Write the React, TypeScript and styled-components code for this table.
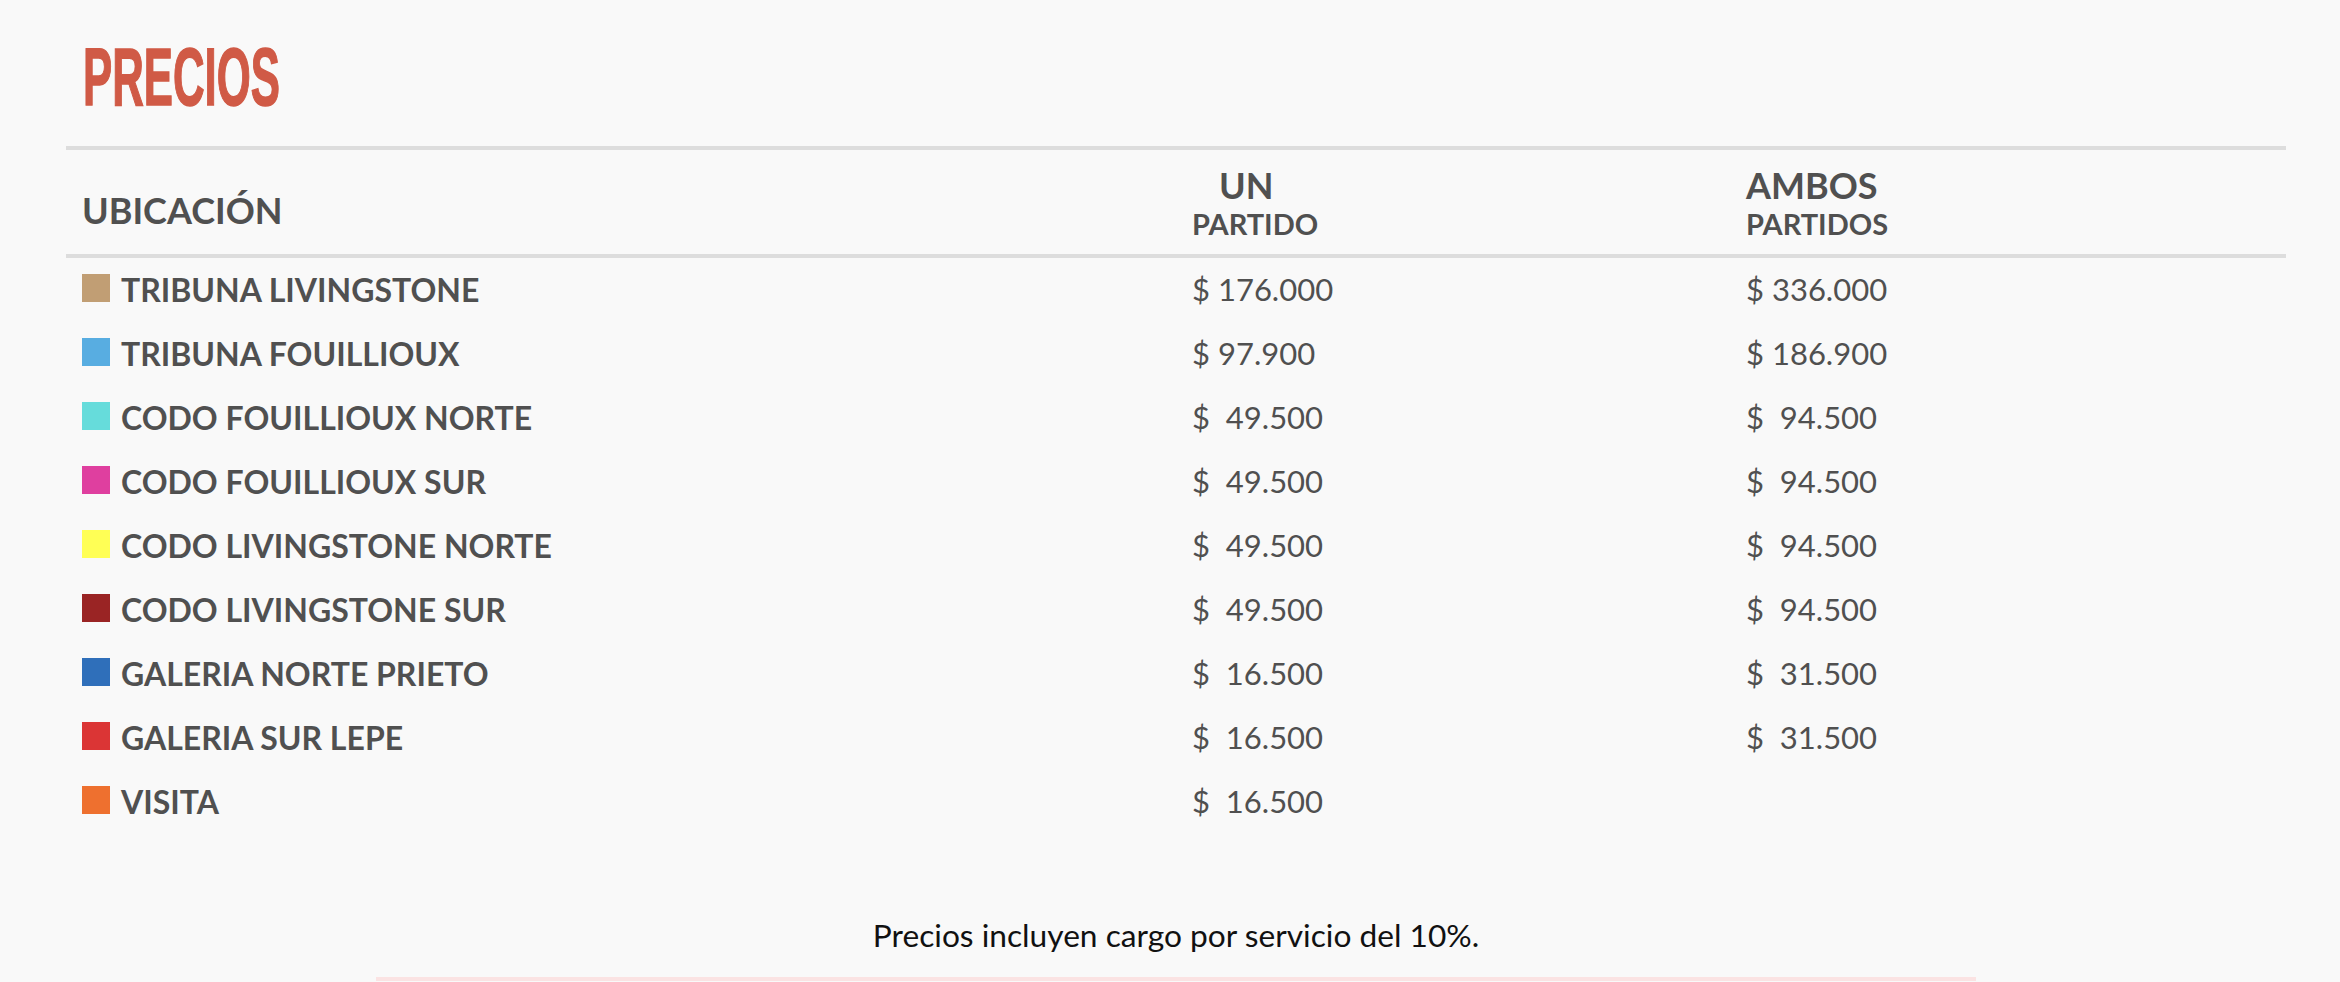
import React from "react";
import styled, { createGlobalStyle } from "styled-components";

const GlobalStyle = createGlobalStyle`
  html, body {
    margin: 0;
    padding: 0;
    background: #f9f9f9;
  }
  body {
    font-family: Lato, "Noto Sans", sans-serif;
    color: #505050;
  }
`;

const Page = styled.main`
  min-height: 982px;
  background: #f9f9f9;
`;

const Section = styled.section`
  width: 2220px;
  margin-left: 66px;
  display: flex;
  flex-direction: column;
`;

const Title = styled.h1`
  margin: 37px 0 28px 17px;
  font-family: "Liberation Sans Narrow", "Liberation Sans", Arial, sans-serif;
  font-weight: 700;
  font-size: 81px;
  line-height: 1;
  color: #d05a46;
  display: inline-block;
  align-self: flex-start;
  transform: scaleX(0.54);
  transform-origin: left center;
  -webkit-text-stroke: 1.5px #d05a46;
`;

const Grid = styled.div`
  display: grid;
  grid-template-columns: 1110px 554px 1fr;
`;

const HeadRow = styled(Grid)`
  height: 104px;
  border-top: 4px solid #dddddd;
  border-bottom: 4px solid #dddddd;
`;

const HeadCell = styled.div<{ $top: number }>`
  padding: ${(p) => p.$top}px 0 0 16px;
  display: flex;
  flex-direction: column;
  font-weight: 700;
  color: #505050;
`;

const HeadMain = styled.span<{ $indent?: number }>`
  font-size: 36px;
  line-height: 1.2;
  padding-left: ${(p) => p.$indent ?? 0}px;
`;

const HeadSub = styled.span`
  font-size: 29px;
  line-height: 1.2;
`;

const Row = styled(Grid)`
  height: 64px;
  align-items: center;
`;

const Cell = styled.div`
  padding-left: 16px;
  display: flex;
  align-items: center;
  line-height: 1.2;
`;

const Location = styled(Cell)`
  font-weight: 700;
  font-size: 32px;
  gap: 11px;
`;

const Swatch = styled.span<{ $color: string }>`
  width: 28px;
  height: 28px;
  flex: none;
  margin-bottom: 4px;
  background: ${(p) => p.$color};
`;

const Price = styled(Cell)`
  font-weight: 400;
  font-size: 31px;
  white-space: pre;
`;

const Note = styled.p`
  margin: 82px 0 0;
  text-align: center;
  font-size: 31.7px;
  line-height: 1.2;
  color: #111111;
`;

const Rule = styled.div`
  width: 1600px;
  align-self: center;
  margin-top: 23px;
  border-top: 4px solid #fbe3e3;
`;

type Item = { name: string; color: string; one: string; both?: string };

const items: Item[] = [
  { name: "TRIBUNA LIVINGSTONE", color: "#c19e74", one: "$ 176.000", both: "$ 336.000" },
  { name: "TRIBUNA FOUILLIOUX", color: "#58ade1", one: "$ 97.900", both: "$ 186.900" },
  { name: "CODO FOUILLIOUX NORTE", color: "#66dcdb", one: "$  49.500", both: "$  94.500" },
  { name: "CODO FOUILLIOUX SUR", color: "#df3f9f", one: "$  49.500", both: "$  94.500" },
  { name: "CODO LIVINGSTONE NORTE", color: "#ffff55", one: "$  49.500", both: "$  94.500" },
  { name: "CODO LIVINGSTONE SUR", color: "#9a2424", one: "$  49.500", both: "$  94.500" },
  { name: "GALERIA NORTE PRIETO", color: "#2f6fba", one: "$  16.500", both: "$  31.500" },
  { name: "GALERIA SUR LEPE", color: "#db3535", one: "$  16.500", both: "$  31.500" },
  { name: "VISITA", color: "#ee702f", one: "$  16.500" },
];

export default function App() {
  return (
    <Page>
      <GlobalStyle />
      <Section>
        <Title>PRECIOS</Title>
        <div>
          <HeadRow>
            <HeadCell $top={39}>
              <HeadMain>UBICACIÓN</HeadMain>
            </HeadCell>
            <HeadCell $top={14}>
              <HeadMain $indent={27}>UN</HeadMain>
              <HeadSub>PARTIDO</HeadSub>
            </HeadCell>
            <HeadCell $top={14}>
              <HeadMain>AMBOS</HeadMain>
              <HeadSub>PARTIDOS</HeadSub>
            </HeadCell>
          </HeadRow>
          {items.map((it) => (
            <Row key={it.name}>
              <Location>
                <Swatch $color={it.color} />
                {it.name}
              </Location>
              <Price>{it.one}</Price>
              <Price>{it.both ?? ""}</Price>
            </Row>
          ))}
        </div>
        <Note>Precios incluyen cargo por servicio del 10%.</Note>
        <Rule />
      </Section>
    </Page>
  );
}
